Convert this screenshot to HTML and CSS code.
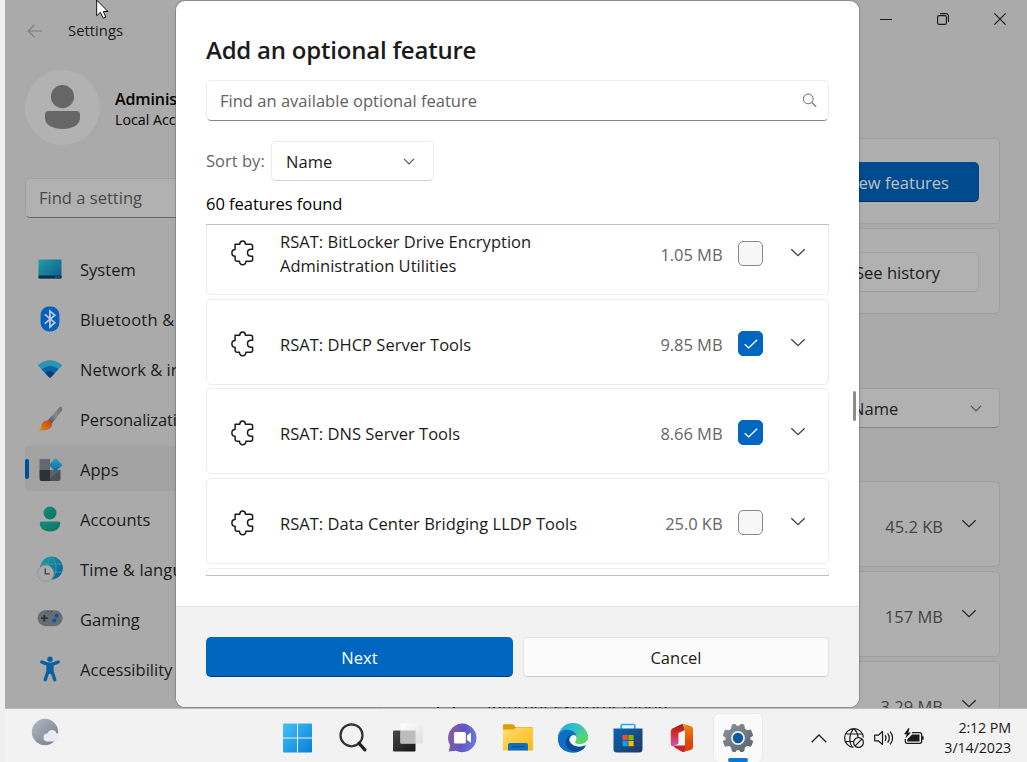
FILE: index.html
```html
<!DOCTYPE html>
<html lang="en">
<head>
<meta charset="utf-8">
<title>Settings</title>
<link rel="stylesheet" href="styles.css">
</head>
<body>
<svg class="defs" width="0" height="0">
  <defs>
    <linearGradient id="teal" x1="0" y1="0" x2="1" y2="1"><stop offset="0" stop-color="#219e9f"/><stop offset="1" stop-color="#0c5a92"/></linearGradient>
    <linearGradient id="green" x1="0" y1="0" x2="1" y2="1"><stop offset="0" stop-color="#168d78"/><stop offset="1" stop-color="#0b7260"/></linearGradient>
    <linearGradient id="pane" x1="0" y1="0" x2="1" y2="1"><stop offset="0" stop-color="#41c4f8"/><stop offset="1" stop-color="#0a7cd6"/></linearGradient>
    <linearGradient id="diamond" x1="0" y1="0" x2="1" y2="1"><stop offset="0" stop-color="#2a9fc0"/><stop offset="1" stop-color="#0a68a8"/></linearGradient>
    <linearGradient id="dark" x1="0" y1="0" x2="1" y2="1"><stop offset="0" stop-color="#4a4a4a"/><stop offset="1" stop-color="#151515"/></linearGradient>
    <linearGradient id="glass" x1="0" y1="0" x2="1" y2="1"><stop offset="0" stop-color="#ffffff"/><stop offset="1" stop-color="#dedede"/></linearGradient>
    <linearGradient id="chat" x1="0" y1=".4" x2="1" y2=".6"><stop offset="0" stop-color="#8a5ba5"/><stop offset=".5" stop-color="#5f58c0"/><stop offset="1" stop-color="#6a7be0"/></linearGradient>
    <linearGradient id="folder" x1="0" y1="0" x2="1" y2="1"><stop offset="0" stop-color="#ffdc71"/><stop offset="1" stop-color="#fbb90f"/></linearGradient>
    <linearGradient id="edgeTop" x1="0" y1="0" x2="1" y2=".6"><stop offset="0" stop-color="#26a8e8"/><stop offset=".55" stop-color="#31c3c4"/><stop offset="1" stop-color="#65dc59"/></linearGradient>
    <linearGradient id="store" x1="0" y1="0" x2="1" y2="1"><stop offset="0" stop-color="#0866b8"/><stop offset="1" stop-color="#25355e"/></linearGradient>
    <linearGradient id="office" x1="0" y1="0" x2="0" y2="1"><stop offset="0" stop-color="#9c1d16"/><stop offset=".5" stop-color="#d92f3a"/><stop offset="1" stop-color="#b95fc0"/></linearGradient>
    <linearGradient id="flame" x1="0" y1="0" x2="0" y2="1"><stop offset="0" stop-color="#f48b0c"/><stop offset=".6" stop-color="#e04c08"/><stop offset="1" stop-color="#d93a05"/></linearGradient>
    <linearGradient id="moon" x1="0" y1="0" x2="1" y2="1"><stop offset="0" stop-color="#b2bcc7"/><stop offset="1" stop-color="#747b84"/></linearGradient>
    <linearGradient id="gear" x1="0" y1="0" x2="1" y2="1"><stop offset="0" stop-color="#8b959c"/><stop offset="1" stop-color="#596168"/></linearGradient>
    <linearGradient id="brush" x1="1" y1="0" x2="0" y2="1"><stop offset="0" stop-color="#6b6f74"/><stop offset=".5" stop-color="#85898d"/><stop offset="1" stop-color="#46494d"/></linearGradient>
    <linearGradient id="bristle" x1="1" y1="0" x2="0" y2="1"><stop offset="0" stop-color="#ca3b12"/><stop offset="1" stop-color="#d59319"/></linearGradient>
    <symbol id="puzzle" viewBox="0 0 24 26"><path d="M4.1 4.2H8.8C8.8 2.2 10 .9 11.6 .9S14.4 2.2 14.4 4.2H19.6Q21.6 4.2 21.6 6.2V9.3H20.2C17.4 9.3 16.500 11 16.500 12.700S17.400 16.200 20.200 16.200H21.600V19.600Q21.600 21.300 19.800 21.300H14.900C14.900 23.600 13.400 24.700 11.700 24.700S8.500 23.600 8.500 21.300H5.800Q4.100 21.300 4.100 19.600V16.200C2.100 16.200 .9 14.700 .9 12.900S2.100 9.600 4.100 9.600Z" fill="none" stroke="#1b1b1b" stroke-width="1.500" stroke-linejoin="round"/></symbol>
    <symbol id="chev" viewBox="0 0 16 9"><path d="M1.3 1.2L8 7.700L14.700 1.200" fill="none" stroke="currentColor" stroke-width="1.300"/></symbol>
    <symbol id="chevSmall" viewBox="0 0 12 7"><path d="M1 .9L6 5.900L11 .9" fill="none" stroke="currentColor" stroke-width="1.200"/></symbol>
  </defs>
</svg>

<div class="desktop">
  <div class="window">
    <header class="titlebar">
      <svg class="back" viewBox="0 0 16 14" width="16" height="14"><path d="M15 7H1.3M7.4 .9L1.2 7l6.2 6.1" fill="none" stroke="#7d7d7d" stroke-width="1.2"/></svg>
      <span class="app-name">Settings</span>
      <div class="controls">
        <svg viewBox="0 0 12 12" width="12" height="12"><path d="M0 6.5h12" stroke="#1a1a1a" stroke-width="1"/></svg>
        <svg viewBox="0 0 12 12" width="12" height="12"><rect x=".6" y="2.6" width="8.8" height="8.8" rx="1.5" fill="none" stroke="#1a1a1a" stroke-width="1.1"/><path d="M3 .6h6a2.4 2.4 0 0 1 2.4 2.4v6" fill="none" stroke="#1a1a1a" stroke-width="1.1"/></svg>
        <svg viewBox="0 0 12 12" width="12" height="12"><path d="M.4 .4l11.2 11.2M11.6 .4L.4 11.6" stroke="#1a1a1a" stroke-width="1.2"/></svg>
      </div>
    </header>

    <div class="window-body">
      <nav class="sidebar">
        <div class="profile">
          <svg class="avatar" viewBox="0 0 75 75" width="75" height="75"><circle cx="37.5" cy="37.5" r="37.5" fill="#b2b2b2"/><circle cx="37.5" cy="26.6" r="11.6" fill="#666"/><path d="M23.500 41h28q3.500 0 3.500 3.500v3.500c0 7-8 11-17.500 11S20 55 20 48v-3.500q0-3.500 3.500-3.500z" fill="#666"/></svg>
          <div class="who"><div class="user">Administrator</div><div class="kind">Local Account</div></div>
        </div>
        <div class="side-search">Find a setting</div>
        <ul class="menu">
          <li><svg viewBox="0 0 26 26" width="26" height="26"><rect x="1.500" y="3.500" width="23" height="19" rx="1.200" fill="url(#teal)"/><path d="M1.500 19.500h23v2q0 1-1 1h-21q-1 0-1-1z" fill="#0a3049"/><path d="M18.500 21h1.200M21.300 21h1.200" stroke="#7d97a5" stroke-width="1"/></svg><span>System</span></li>
          <li><svg viewBox="0 0 26 26" width="26" height="26"><rect x="3.600" y=".6" width="18.800" height="25" rx="8.500" fill="#0460bd"/><path d="M7.800 8.400l10 8.300-4.900 4.300V5l4.900 4.200-10 8.400" fill="none" stroke="#c3cbd6" stroke-width="1.700"/></svg><span class="bluetooth">Bluetooth &amp; devices</span></li>
          <li><svg viewBox="0 0 26 26" width="26" height="26"><path d="M.7 9.300Q13 -.6 25.300 9.300L13 22z" fill="#2a94b4"/><path d="M4.500 13.300Q13 6.300 21.500 13.300L13 22z" fill="#0b65a5"/><path d="M8.300 17.200Q13 12.900 17.700 17.200L13 22z" fill="#0a3c74"/></svg><span>Network &amp; internet</span></li>
          <li><svg viewBox="0 0 26 26" width="26" height="26"><path d="M24.800 1.200c1 1 .4 2.600-.4 4L15 17.500l-4.200-3.200L21.500 2.200c1-1 2.300-1.900 3.300-1z" fill="url(#brush)"/><path d="M10 14.500c3-.4 4.900 1.600 5 4.300-.5 4-5 6.400-13.600 5.700 2.300-1 2.500-2.300 3-5C5 16.500 7 14.800 10 14.500z" fill="url(#bristle)"/></svg><span class="personal">Personalization</span></li>
          <li class="current"><svg viewBox="0 0 26 26" width="26" height="26"><path d="M2.500 4q0-1 1-1H13v11H2.500z" fill="#646770"/><path d="M2.500 14H13v11H4.500q-2 0-2-2z" fill="#303134"/><path d="M13 14h10.500v9q0 2-2 2H13z" fill="#4c5054"/><path d="M13 14h10.500L13 22z" fill="#5d6266"/><rect x="13.700" y="4" width="9.800" height="9.800" rx="1" transform="rotate(45 18.600 8.900)" fill="url(#diamond)"/></svg><span>Apps</span></li>
          <li><svg viewBox="0 0 26 26" width="26" height="26"><circle cx="13" cy="7" r="6.500" fill="url(#green)"/><path d="M4.500 15.500h17q1.800 0 1.800 2c-.3 5-4.800 8-10.300 8s-10-3-10.300-8q0-2 1.800-2z" fill="url(#green)"/></svg><span>Accounts</span></li>
          <li><svg viewBox="0 0 26 26" width="26" height="26"><circle cx="14.500" cy="12" r="11.400" fill="url(#teal)"/><path d="M4 8h21M4 16h21M14.500 .6c-6 6-6 17 0 23M14.500 .6c6 6 6 17 0 23" fill="none" stroke="#2f9bae" stroke-width="1"/><circle cx="8.700" cy="17.300" r="8.200" fill="#aaa9ab" stroke="#858585" stroke-width=".5"/><path d="M8.300 12.500v5.300h4.500" fill="none" stroke="#404040" stroke-width="1.300"/></svg><span class="time">Time &amp; language</span></li>
          <li><svg viewBox="0 0 26 26" width="26" height="26"><rect x=".6" y="4.200" width="25" height="16" rx="8" fill="#666c72"/><path d="M4 12.200h6.600M7.300 9v6.400" stroke="#2d3033" stroke-width="1.800"/><circle cx="19.600" cy="9.800" r="2" fill="#0755a3"/><circle cx="17.300" cy="14.600" r="2" fill="#0755a3"/><path d="M10.300 5.500h1.300M14 5.500h1.300" stroke="#333" stroke-width="1.200"/></svg><span>Gaming</span></li>
          <li><svg viewBox="0 0 26 26" width="26" height="26"><circle cx="13" cy="3.300" r="2.700" fill="#0a609d"/><path d="M4.800 6l6 2.300h4.400L21.200 6M11 9v6.500L8.200 23.700M15 9v6.500l2.800 8.200" fill="none" stroke="#0a609d" stroke-width="3.400" stroke-linecap="round" stroke-linejoin="round"/><path d="M10.300 8h5.400v9l-2.700 1-2.700-1z" fill="#0a609d"/></svg><span>Accessibility</span></li>
        </ul>
      </nav>

      <main class="content">
        <section class="card"><span class="btn-primary">View features</span></section>
        <section class="card"><span class="btn-plain">See history</span></section>
        <div class="sort-back"><span>Name</span><svg width="12" height="7"><use href="#chevSmall"/></svg></div>
        <section class="card row"><span class="size">45.2 KB</span><svg class="chev-l" width="16" height="9"><use href="#chev"/></svg></section>
        <section class="card row"><span class="size">157 MB</span><svg class="chev-l" width="16" height="9"><use href="#chev"/></svg></section>
        <section class="card row"><svg width="24" height="26"><use href="#puzzle"/></svg><span class="label">Internet Explorer mode</span><span class="size">3.29 MB</span><svg class="chev-l" width="16" height="9"><use href="#chev"/></svg></section>
      </main>
    </div>

    <div class="dialog">
      <div class="dialog-body">
        <h1>Add an optional feature</h1>
        <div class="find"><span>Find an available optional feature</span><svg viewBox="0 0 15 15" width="15" height="15"><circle cx="6.200" cy="5.900" r="4.900" fill="none" stroke="#6b6b6b" stroke-width="1"/><path d="M9.800 9.500l4.400 4.300" stroke="#6b6b6b" stroke-width="1.100"/></svg></div>
        <div class="sort"><span class="sort-label">Sort by:</span><div class="combo"><span>Name</span><svg width="12" height="7"><use href="#chevSmall"/></svg></div></div>
        <p class="count">60 features found</p>
        <ul class="features">
          <li class="first"><svg width="24" height="26"><use href="#puzzle"/></svg><span class="name">RSAT: BitLocker Drive Encryption<br>Administration Utilities</span><span class="mb">1.05 MB</span><i class="box"></i><svg class="chev-l" width="16" height="9"><use href="#chev"/></svg></li>
          <li><svg width="24" height="26"><use href="#puzzle"/></svg><span class="name">RSAT: DHCP Server Tools</span><span class="mb">9.85 MB</span><i class="box on"><svg viewBox="0 0 14 10" width="14" height="10"><path d="M.8 5.200l3.900 3.700L13.200 .8" fill="none" stroke="#fff" stroke-width="1.400"/></svg></i><svg class="chev-l" width="16" height="9"><use href="#chev"/></svg></li>
          <li class="tight"><svg width="24" height="26"><use href="#puzzle"/></svg><span class="name">RSAT: DNS Server Tools</span><span class="mb">8.66 MB</span><i class="box on"><svg viewBox="0 0 14 10" width="14" height="10"><path d="M.8 5.200l3.900 3.700L13.200 .8" fill="none" stroke="#fff" stroke-width="1.400"/></svg></i><svg class="chev-l" width="16" height="9"><use href="#chev"/></svg></li>
          <li><svg width="24" height="26"><use href="#puzzle"/></svg><span class="name">RSAT: Data Center Bridging LLDP Tools</span><span class="mb">25.0 KB</span><i class="box"></i><svg class="chev-l" width="16" height="9"><use href="#chev"/></svg></li>
          <li></li>
        </ul>
      </div>
      <footer class="dialog-foot"><span class="next">Next</span><span class="cancel">Cancel</span></footer>
      <div class="thumb"></div>
    </div>
  </div>

  <div class="taskbar">
    <svg class="weather" viewBox="0 0 30 30" width="30" height="30"><circle cx="14" cy="14" r="13.200" fill="url(#moon)"/><path d="M16.500 23.500a4 4 0 0 1 0-8c1.500-4.800 8-4.600 8.800-.3 4.200-.5 4.800 7 1.200 8.300z" fill="#e9edf1"/></svg>
    <div class="apps">
      <span><svg viewBox="0 0 30 30" width="30" height="30"><rect x="0" y=".5" width="29" height="29" rx="1" fill="url(#pane)"/><path d="M14.500 .5v29M0 15h29" stroke="#f2f2f2" stroke-width="1"/></svg></span>
      <span><svg viewBox="0 0 30 30" width="30" height="30"><circle cx="13.500" cy="12.300" r="11" fill="none" stroke="#303030" stroke-width="2.200"/><path d="M21 20.300l6 6.500" stroke="#202020" stroke-width="3.200" stroke-linecap="round"/></svg></span>
      <span><svg viewBox="0 0 30 30" width="30" height="30"><rect x="0" y="7.500" width="22.500" height="21" rx="1" fill="url(#dark)"/><rect x="7.500" y=".5" width="22.500" height="20" rx="1" fill="url(#glass)"/><rect x="7.500" y="7.500" width="15" height="13" fill="#bdbdbd"/></svg></span>
      <span><svg viewBox="0 0 30 30" width="30" height="30"><path d="M14 .6a14.300 14.300 0 1 1-6 27.200l-7.200 .8 1.200-6.400A14.300 14.300 0 0 1 14 .6z" fill="url(#chat)"/><rect x="6" y="9" width="11.800" height="11.500" rx="1.600" fill="#fff"/><path d="M19 12.500l4-3v10.300l-4-2.800z" fill="#fff"/></svg></span>
      <span><svg viewBox="0 0 30 30" width="30" height="30"><path d="M0 2.500q0-1.200 1.200-1.200H10l3 3h15.800q1.200 0 1.200 1V9H0z" fill="#dd9d08"/><path d="M0 6.600h10.500l2.800-1.800H30v22.700H0z" fill="url(#folder)"/><path d="M5 22q0-2 2-2h16q2 0 2 2v5.500H5z" fill="#0d70be"/><path d="M9 23.700h12" stroke="#064b85" stroke-width="1.200"/></svg></span>
      <span><svg viewBox="0 0 30 30" width="30" height="30"><circle cx="15" cy="15" r="15" fill="url(#edgeTop)"/><path d="M.3 12C3 7 8 6 12 7.200c5 1.300 7 4.800 6.500 8-2-2.500-6-2-7.500 1.300-1 6 7 10.500 15.600 8C20 33-1 31 0 15z" fill="#0c6fc4"/><path d="M13.200 11.700c-6.400 2.300-7.500 10.500-1.900 14.800 4.700 3.300 11.700 2.300 15.700-2.500.8-1-.2-1.800-1.200-1.200-6.300 2.800-13.600-1-14.500-6.200-.2-2.100.5-3.900 1.900-4.900z" fill="#0d4a96"/><path d="M17.400 12.400c2 1.800 1.500 4.300.2 6.200-.6 1.300 1.200 2.400 5 2.200 3.400-.2 6.400-2.400 7.300-4.800l.3 5-3.700 1.500c-7 2.700-14.200-.5-15-5-.3-3.200 2.800-6.500 5.900-5.100z" fill="#f2f3f3"/><path d="M17.300 19c-.6 1.300 1.700 2 4.800 2 4.200-.2 7.300-2.700 7.900-6V11L18 12.500c1.800 2 .7 4.800-.7 6.500z" fill="#54d36f"/></svg></span>
      <span><svg viewBox="0 0 30 30" width="30" height="30"><path d="M8.200 7V2.500q0-1 1-1h11.600q1 0 1 1V7" fill="none" stroke="#1bb3ee" stroke-width="1.700"/><path d="M.5 5.500h29V26q0 3.500-3.500 3.500H4Q.5 29.500 .5 26z" fill="url(#store)"/><rect x="9.500" y="12" width="5.200" height="5.200" fill="#f25022"/><rect x="15.400" y="12" width="5.200" height="5.200" fill="#7fba00"/><rect x="9.500" y="18" width="5.200" height="5.200" fill="#00a4ef"/><rect x="15.400" y="18" width="5.200" height="5.200" fill="#ffb900"/></svg></span>
      <span><svg viewBox="0 0 30 30" width="30" height="30"><path d="M14.500 .7L17 7l-6.500 3v10.500l-5 2.800q-2.700 .6-2.700-2.500V8.500q0-2 1.600-2.900z" fill="url(#office)"/><path d="M14.500 .7l8.700 2.600q1.800.6 1.800 2.500v18.500q0 1.900-1.800 2.500l-8.700 2.300L17 23V6z" fill="url(#flame)"/><path d="M6.500 22.500H17v6l-2.500 .6-7.600-4.400q-1.800-1.100-.4-2.200z" fill="#ce1f2c"/></svg></span>
      <span class="active"><svg viewBox="0 0 30 30" width="30" height="30"><path d="M10.500 1h2l1.200 1.800h2.600L17.500 1h2l1.700 .8 .8 4 2.200 1.400 3.800-.8L30 12v1l-2.600 1.500v2L30 18v1l-2 4.700-3.800-.8L22 24.300l-.8 4-1.700.8h-2l-1.200-1.800h-2.600L12.500 29h-2l-1.700-.7-.8-4-2.200-1.400-3.800.8L0 19v-1l2.600-1.500v-2L0 13v-1l2-5.600 3.800.8L8 5.800l.8-4z" fill="url(#gear)"/><circle cx="15" cy="15" r="6.900" fill="#eef1f3"/><circle cx="15" cy="15" r="5.200" fill="#0b58a7"/></svg></span>
    </div>
    <div class="tray">
      <svg viewBox="0 0 16 9" width="16" height="9"><path d="M.7 8.200L8 1l7.300 7.200" fill="none" stroke="#1b1b1b" stroke-width="1.300"/></svg>
      <svg viewBox="0 0 20 20" width="20" height="20"><g fill="none" stroke="#1b1b1b" stroke-width="1.200"><path d="M9.500 19.400A9.400 9.400 0 1 1 19.400 9.500M1.400 6h17.200M1.400 13.500H9M10 .6C5 5 4.500 14 8.500 19.200M10 .6c2.500 2.500 3.800 5.500 4 8.400"/><circle cx="14.500" cy="14.500" r="4.900"/><path d="M11.200 17.800l6.600-6.600"/></g></svg>
      <svg viewBox="0 0 20 20" width="20" height="20"><g fill="none" stroke="#1b1b1b" stroke-width="1.200"><path d="M.7 7.200h3.600l4.200-3.700v13l-4.200-3.700H.7z" stroke-linejoin="round"/><path d="M11 7.200q2 2.800 0 5.600M13.600 5.300q3.400 4.700 0 9.400M16.200 3.600q4.800 6.400 0 12.800"/></g></svg>
      <svg viewBox="0 0 20 20" width="20" height="20"><path d="M8 4.700h7.700q2 0 2 2v6.600q0 2-2 2H3.300q-2 0-2-2V11" fill="none" stroke="#1b1b1b" stroke-width="1.300"/><path d="M8 6.500h7.500V13.500H3.200V11.500z" fill="#1b1b1b"/><path d="M18 8.300h1.600v3.400H18z" fill="#1b1b1b"/><path d="M4.500 0L0 6.300h2.600L1.500 10.300 7 4.500H4.200L5.500 .5z" fill="#1b1b1b"/></svg>
      <div class="clock"><div>2:12 PM</div><div>3/14/2023</div></div>
    </div>
  </div>
  <svg class="cursor" viewBox="0 0 13 20" width="13" height="20"><path d="M.7 -1V15.800L4.400 12.300L7.200 18.300L9.900 17.100L7.300 11.500H12L.7 .2z" fill="#fff" stroke="#111" stroke-width="1"/></svg>
</div>
</body>
</html>
```
FILE: styles.css
```css
* { box-sizing: border-box; }
body { margin: 0; font-family: "Open Sans", "Noto Sans", sans-serif; font-size: 16.5px; letter-spacing: 0.02px; color: #1b1b1b; }
ul { list-style: none; margin: 0; padding: 0; }
.defs { position: absolute; }
svg { flex: none; display: block; overflow: visible; }
.desktop { position: relative; width: 1027px; height: 762px; padding-left: 5px; background: #efefef; overflow: hidden; display: flex; flex-direction: column; }
.window { position: relative; height: 709px; background: #aaa; overflow: hidden; flex: none; border-bottom: 1px solid #bcbcbc; }

.titlebar { height: 69px; display: flex; align-items: flex-start; padding: 0 21px 0 22px; }
.back { margin-top: 24px; }
.app-name { margin: 19px 0 0 25px; font-size: 14.8px; line-height: 22px; }
.controls { margin: 13px 0 0 auto; display: flex; gap: 45px; }

.window-body { display: flex; height: 640px; }
.sidebar { width: 375px; padding-left: 20px; flex: none; }
.profile { display: flex; gap: 15px; padding-top: 1px; }
.who { padding-top: 19px; color: #000; white-space: nowrap; }
.user { font-size: 16px; font-weight: 600; line-height: 21px; letter-spacing: -0.1px; }
.kind { font-size: 14.2px; line-height: 20px; }
.side-search { margin-top: 33px; height: 40px; border: 1px solid #a0a0a0; border-bottom-color: #666; border-radius: 5px; background: #b1b1b1; padding-left: 13px; line-height: 38px; color: #494949; }
.menu { margin-top: 28px; display: flex; flex-direction: column; gap: 5px; }
.menu li { position: relative; height: 45px; display: flex; align-items: center; gap: 17px; padding-left: 12px; border-radius: 5px; white-space: nowrap; }
.menu span { padding-top: 1px; }
.menu .personal { letter-spacing: -0.12px; }
.menu .bluetooth { letter-spacing: 0.2px; }
.menu .time { letter-spacing: 0.15px; }
.menu .current { background: #a2a2a2; }
.current::before { content: ""; position: absolute; left: 0; top: 13px; width: 4px; height: 20px; border-radius: 2px; background: #004e94; }

.content { flex: 1; padding: 69px 27px 0 0; }
.card { height: 86px; border: 1px solid #9f9f9f; border-radius: 5px; background: #afafaf; margin-bottom: 4px; display: flex; align-items: center; justify-content: flex-end; padding: 2px 20px 0 0; }
.btn-primary { height: 40px; width: 150px; border-radius: 5px; background: #004b8e; border-bottom: 1px solid #002f60; color: #c2c2c2; text-align: right; padding-right: 30px; line-height: 41px; }
.btn-plain { height: 40px; width: 170px; border-radius: 5px; border: 1px solid #a3a3a3; border-bottom-color: #999; background: #b1b1b1; text-align: right; padding-right: 38px; line-height: 39px; }
.sort-back { height: 40px; margin: 74px 0 53px auto; width: 200px; border: 1px solid #9f9f9f; border-bottom-color: #848484; border-radius: 5px; background: #b1b1b1; display: flex; align-items: center; justify-content: space-between; padding: 0 17px 0 51px; }
.row { padding: 4px 22px 0 56px; }
.row .size { margin-left: auto; color: #444; }
.row .label { margin-left: 26px; }
.row .chev-l { margin: -6px 0 0 18px; color: #292929; }

.dialog { position: absolute; left: 171px; top: 1px; width: 683px; height: 706px; background: #fff; border-radius: 9px; box-shadow: 0 0 0 1px rgba(0,0,0,.14), 0 0 5px rgba(0,0,0,.1); display: flex; flex-direction: column; }
.dialog-body { height: 605px; padding: 33px 30px 0; }
h1 { margin: 0; font-size: 24px; font-weight: 600; line-height: 32px; letter-spacing: -0.22px; }
.find { margin-top: 14px; height: 41px; border: 1px solid #ececec; border-bottom-color: #868686; border-radius: 5px; display: flex; align-items: center; justify-content: space-between; padding: 0 11px 0 13px; color: #616161; }
.sort { margin-top: 20px; display: flex; align-items: center; height: 40px; }
.sort-label { width: 65px; color: #666; white-space: nowrap; padding-bottom: 1px; }
.combo { width: 163px; height: 40px; border: 1px solid #ececec; border-bottom-color: #d2d2d2; border-radius: 5px; display: flex; align-items: center; justify-content: space-between; padding: 0 18px 0 14px; }
.combo span { padding-top: 1px; }
.combo svg, .sort-back svg { color: #555; }
.count { margin: 11px 0 8px; line-height: 24px; color: #000; letter-spacing: -0.04px; }
.features { height: 352px; border-top: 1px solid #bfbfbf; border-bottom: 1px solid #bfbfbf; overflow: hidden; display: flex; flex-direction: column; gap: 4px; }
.features li { height: 86px; flex: none; border: 1px solid #ececec; border-radius: 5px; display: flex; align-items: center; padding: 3px 22px 0 24px; }
.features .first { height: 70px; border-top: 0; border-radius: 0 0 5px 5px; padding: 0 22px 13px 24px; }
.features .tight { margin-top: -1px; }
.name { margin-left: 25px; flex: 1; line-height: 24px; padding-top: 2px; }
.mb { color: #666; padding-top: 2px; margin-right: -0.5px; letter-spacing: -0.05px; }
.box { width: 25px; height: 25px; margin: 0 27px 0 16px; border: 1px solid #868686; border-radius: 5px; background: #f7f7f7; display: flex; align-items: center; justify-content: center; }
.box.on { background: #0067c0; border-color: #0067c0; }
.features .chev-l { margin-top: -3px; color: #404040; }
.features .first .chev-l { margin-top: -2px; }
.dialog-foot { flex: 1; border-top: 1px solid #e3e3e3; border-radius: 0 0 9px 9px; background: #f2f2f2; padding: 30px; display: flex; gap: 10px; }
.next, .cancel { height: 40px; border-radius: 5px; text-align: center; line-height: 42px; }
.next { width: 307px; background: #0067c0; border-bottom: 1px solid #003e73; color: #fff; }
.cancel { width: 306px; background: #fbfbfb; border: 1px solid #e2e2e2; border-bottom-color: #cacaca; line-height: 40px; }
.thumb { position: absolute; left: 677px; top: 390px; width: 3px; height: 30px; border-radius: 2px; background: #8b8b8b; }

.taskbar { height: 53px; flex: none; background: #f2f2f2; display: flex; padding: 0 16px 0 26px; }
.weather { margin-top: 9px; }
.apps { display: flex; margin-left: 209.5px; }
.apps span { position: relative; width: 55px; height: 53px; display: flex; justify-content: center; padding-top: 14px; }
.apps .active { width: 48px; margin: 5px 0 0 3.5px; height: 48px; padding-top: 9px; border-radius: 5px; background: #fafafa; box-shadow: 0 0 0 1px #ebebeb; }
.active::after { content: ""; position: absolute; left: 14px; bottom: 0; width: 20px; height: 4px; border-radius: 2px; background: #0878d4; }
.tray { margin-left: auto; display: flex; align-items: center; height: 58px; gap: 10px; }
.tray > svg:first-child { margin-right: 7px; }
.clock { width: 77px; text-align: right; font-size: 14.3px; line-height: 20px; letter-spacing: -0.12px; white-space: nowrap; }
.cursor { position: absolute; left: 96px; top: 0; }
```
